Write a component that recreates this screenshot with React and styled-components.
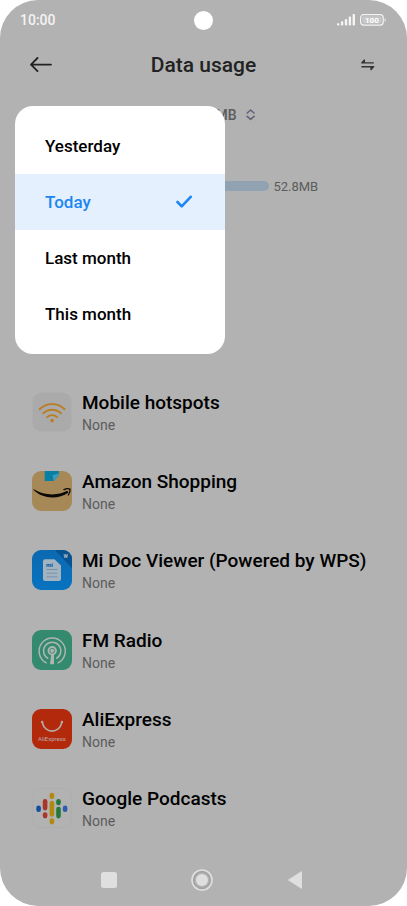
import React, { useState } from "react";
import styled, { createGlobalStyle } from "styled-components";

const GlobalStyle = createGlobalStyle`
  * {
    box-sizing: border-box;
  }
  body {
    margin: 0;
    background: #fff;
    font-family: Roboto, "Liberation Sans", sans-serif;
  }
  button {
    border: 0;
    padding: 0;
    background: none;
    color: inherit;
    font: inherit;
    cursor: pointer;
  }
  svg {
    display: block;
    flex-shrink: 0;
  }
`;

const Phone = styled.div`
  display: flex;
  flex-direction: column;
  min-height: 100vh;
  border-radius: 38px;
  background: #b2b2b2;
`;
const StatusBar = styled.div`
  display: grid;
  grid-template-columns: 1fr auto 1fr;
  align-items: center;
  height: 40px;
  padding: 0 20px;
  color: #f4f4f4;
`;
const Clock = styled.span`
  font-size: 14px;
  font-weight: 500;
`;
const Camera = styled.span`
  width: 19px;
  height: 19px;
  border-radius: 50%;
  background: #fff;
`;
const StatusIcons = styled.div`
  display: flex;
  align-items: center;
  justify-content: flex-end;
  gap: 4px;
`;
const Header = styled.header`
  display: flex;
  align-items: center;
  justify-content: space-between;
  height: 50px;
  padding: 0 30px;
  color: #222;
`;
const Title = styled.h1`
  margin: 0;
  font-size: 21px;
  font-weight: 500;
`;
const HeaderButton = styled.button`
  display: flex;
  justify-content: ${props => (props.$end ? "flex-end" : "flex-start")};
  width: 24px;
`;
const Summary = styled.section`
  position: relative;
  min-height: 282px;
  padding: 13px 30px 0;
  color: #5c5c5c;
`;
const PeriodButton = styled.button`
  display: flex;
  align-items: center;
  justify-content: flex-end;
  gap: 9px;
  width: 65%;
  height: 24px;
  font-size: 14px;
  font-weight: 500;
`;
const UsageRow = styled.div`
  display: flex;
  align-items: center;
  gap: 4px;
  height: 24px;
  margin-top: 47px;
  font-size: 13px;
`;
const UsageBar = styled.div`
  width: 69%;
  height: 10px;
  border-radius: 5px;
  background: #91a3b3;
`;
const Menu = styled.div`
  position: absolute;
  top: 16px;
  left: 15px;
  width: 210px;
  padding: 12px 0;
  border-radius: 18px;
  background: #fff;
`;
const MenuItem = styled.button`
  display: flex;
  align-items: center;
  justify-content: space-between;
  width: 100%;
  height: 56px;
  padding: 0 32px 0 30px;
  background: ${props => (props.$active ? "#e4f0fe" : "transparent")};
  color: ${props => (props.$active ? "#1c86f2" : "#000")};
  font-size: 17px;
  font-weight: 500;
`;
const AppList = styled.ul`
  display: grid;
  flex: 1;
  grid-auto-rows: 1fr;
  margin: 0;
  padding: 0 32px;
  list-style: none;
`;
const AppRow = styled.li`
  display: flex;
  align-items: center;
  gap: 10px;
`;
const AppText = styled.div`
  padding-top: 2px;
`;
const AppName = styled.div`
  color: #000;
  font-size: 19px;
  font-weight: 500;
  line-height: 24px;
`;
const AppUsage = styled.div`
  color: #5c5c5c;
  font-size: 14px;
  line-height: 20px;
`;
const NavBar = styled.nav`
  display: flex;
  justify-content: center;
  gap: 69px;
  height: 58px;
  padding: 6px 4px 0 0;
`;
const NavButton = styled.button`
  display: flex;
  align-items: center;
  justify-content: center;
  width: 24px;
`;

const Signal = () => (
  <svg width="18" height="12" viewBox="0 0 18 12" fill="currentColor" aria-hidden="true">
    <rect x="0" y="9.2" width="2.4" height="2.4" rx=".8" />
    <rect x="3.9" y="7.2" width="2.4" height="4.4" rx=".8" />
    <rect x="7.8" y="5" width="2.4" height="6.6" rx=".8" />
    <rect x="11.700" y="2.600" width="2.400" height="9" rx=".8" />
    <rect x="15.600" y="0" width="2.400" height="11.600" rx=".8" />
  </svg>
);

const Battery = () => (
  <svg width="28" height="12" viewBox="0 0 28 12" aria-hidden="true">
    <rect x="1.600" y=".7" width="22.600" height="10.400" rx="3" fill="none" stroke="#f4f4f4" strokeWidth="1.200" />
    <rect x="3.200" y="2.300" width="19.400" height="7.200" rx="1.600" fill="#c8c8c8" />
    <path d="M25.600 4.200v3.400c.8-.3 1.100-.9 1.100-1.700s-.3-1.400-1.100-1.700z" fill="#f4f4f4" />
    <text x="12.900" y="8.900" fill="#fff" fontSize="8" fontWeight="700" textAnchor="middle">
      100
    </text>
  </svg>
);

const HotspotIcon = () => (
  <svg width="40" height="40" viewBox="0 0 40 40" aria-hidden="true">
    <rect width="39" height="39" x=".5" y=".5" rx="9.500" fill="#aaa" />
    <g fill="none" stroke="#b97d24" strokeWidth="1.900" strokeLinecap="round">
      <path d="M7.600 17.200a18 18 0 0 1 25 0" />
      <path d="M11.300 21.300a12.600 12.600 0 0 1 17.600 0" />
      <path d="M15.100 25.100a7.200 7.200 0 0 1 10 0" />
    </g>
    <circle cx="20.100" cy="28.600" r="1.800" fill="#b97d24" />
  </svg>
);

const AmazonIcon = () => (
  <svg width="40" height="40" viewBox="0 0 40 40" aria-hidden="true">
    <rect width="40" height="40" rx="9" fill="#a78957" />
    <path d="M12.700 0h14.200v4.400l-5.200 5.500h-9z" fill="#087fa4" />
    <path d="M20.500 4.200l6.400-1.600v1.800l-5.200 5.500z" fill="#3b9cba" />
    <path d="M1.800 18.200C12 24.600 25.500 25 35.300 19.800l1.200 1.600C26 28.900 10.500 28 1.300 18.800z" fill="#090806" />
    <path d="M32 18.700c2.200-1.100 4.400-1.200 6-.6.300 2-.5 4.200-1.700 5.900" fill="none" stroke="#090806" strokeWidth="1.300" strokeLinecap="round" />
  </svg>
);

const DocIcon = () => (
  <svg width="40" height="40" viewBox="0 0 40 40" aria-hidden="true">
    <defs>
      <linearGradient id="docFill" x1="0" y1="0" x2="0" y2="1">
        <stop offset="0" stopColor="#0b69b0" />
        <stop offset="1" stopColor="#0873c0" />
      </linearGradient>
    </defs>
    <rect width="40" height="40" rx="9" fill="url(#docFill)" />
    <path d="M23 0h8a9 9 0 0 1 9 9v9z" fill="#075291" />
    <path d="M13 9.300h9.500l6.500 6.300v13.400a2 2 0 0 1-2 2H13a2 2 0 0 1-2-2V11.300a2 2 0 0 1 2-2z" fill="#a4b3c0" />
    <path d="M14.500 19.500h11M14.500 23.200h11M14.500 26.900h11" stroke="#7793ab" />
    <text x="14" y="17" fill="#0c62a4" fontSize="6" fontWeight="900">
      mi
    </text>
    <text x="33.700" y="8.200" fill="#a4b3c0" fontSize="5" fontWeight="900" textAnchor="middle">
      W
    </text>
  </svg>
);

const RadioIcon = () => (
  <svg width="40" height="40" viewBox="0 0 40 40" aria-hidden="true">
    <rect width="40" height="40" rx="9" fill="#348a6e" />
    <g fill="none" stroke="#adb5b1" strokeLinecap="round">
      <path d="M14.300 32.800a13.100 13.100 0 1 1 11.800 0" strokeWidth="1.500" />
      <path d="M15.800 28.300a8.600 8.600 0 1 1 8.800 0" strokeWidth="1.500" />
      <circle cx="20.200" cy="20.800" r="3.700" strokeWidth="2" />
    </g>
    <circle cx="20.200" cy="20.800" r="2" fill="#adb5b1" />
    <path d="M19.200 24h2.800v10.200h-4z" fill="#adb5b1" />
  </svg>
);

const AliExpressIcon = () => (
  <svg width="40" height="40" viewBox="0 0 40 40" aria-hidden="true">
    <rect width="40" height="40" rx="9" fill="#b2290c" />
    <path d="M10.200 13.200c2.800 11.800 16.900 11.800 19.700 0" fill="none" stroke="#b7aaa7" strokeWidth="1.700" strokeLinecap="round" />
    <circle cx="10.200" cy="12.900" r="1.200" fill="#b7aaa7" />
    <circle cx="29.900" cy="12.900" r="1.200" fill="#b7aaa7" />
    <text x="20" y="31.500" fill="#bda9a5" fontSize="6" textAnchor="middle">
      AliExpress
    </text>
  </svg>
);

const PodcastsIcon = () => (
  <svg width="40" height="40" viewBox="0 0 40 40" aria-hidden="true">
    <rect x=".5" y=".5" width="39" height="39" rx="9" fill="#b2b2b2" stroke="#aeaeae" />
    <rect x="4.300" y="17.600" width="4.600" height="6.400" rx="2.300" fill="#104fa0" />
    <rect x="10.800" y="11" width="4.600" height="11.400" rx="2.300" fill="#aa352b" />
    <rect x="10.800" y="24.200" width="4.600" height="6.200" rx="2.300" fill="#aa352b" />
    <rect x="17.600" y="4.800" width="4.600" height="6.200" rx="2.300" fill="#b28910" />
    <rect x="17.600" y="12.800" width="4.600" height="16" rx="2.300" fill="#b28910" />
    <rect x="17.600" y="30.200" width="4.600" height="6.200" rx="2.300" fill="#b28910" />
    <rect x="24.200" y="11" width="4.600" height="6.200" rx="2.300" fill="#25783b" />
    <rect x="24.200" y="18.800" width="4.600" height="11.600" rx="2.300" fill="#25783b" />
    <rect x="30.800" y="17.600" width="4.600" height="6.400" rx="2.300" fill="#2c5dac" />
  </svg>
);

const periods = ["Yesterday", "Today", "Last month", "This month"];

const apps = [
  { name: "Mobile hotspots", usage: "None", Icon: HotspotIcon },
  { name: "Amazon Shopping", usage: "None", Icon: AmazonIcon },
  { name: "Mi Doc Viewer (Powered by WPS)", usage: "None", Icon: DocIcon },
  { name: "FM Radio", usage: "None", Icon: RadioIcon },
  { name: "AliExpress", usage: "None", Icon: AliExpressIcon },
  { name: "Google Podcasts", usage: "None", Icon: PodcastsIcon }
];

const App = () => {
  const [period, setPeriod] = useState("Today");

  return (
    <Phone>
      <GlobalStyle />
      <StatusBar>
        <Clock>10:00</Clock>
        <Camera />
        <StatusIcons>
          <Signal />
          <Battery />
        </StatusIcons>
      </StatusBar>
      <Header>
        <HeaderButton aria-label="Back">
          <svg width="22" height="16" viewBox="0 0 22 16" fill="none" stroke="currentColor" strokeWidth="1.800" strokeLinecap="round" strokeLinejoin="round">
            <path d="M7.500 1L1 7.600l6.500 6.600M1 7.600h20" />
          </svg>
        </HeaderButton>
        <Title>Data usage</Title>
        <HeaderButton $end aria-label="Switch view">
          <svg width="18" height="12" viewBox="0 0 18 12" fill="#333">
            <path d="M2.200 4.600V3.600L5.200.2l.8.5v2.500h8.800v1.400z" />
            <path d="M15.200 7v1l-3 3.400-.8-.5V8.400H2.400V7z" />
          </svg>
        </HeaderButton>
      </Header>
      <Summary>
        <PeriodButton aria-label="Choose period" aria-haspopup="menu">
          52.8MB
          <svg width="10" height="12" viewBox="0 0 10 12" fill="none" stroke="#62627a" strokeWidth="1.600" strokeLinecap="round" strokeLinejoin="round">
            <path d="M1.200 4L4.600 1 8 4M1.200 7.400l3.400 3 3.400-3" />
          </svg>
        </PeriodButton>
        <UsageRow>
          <UsageBar />
          52.8MB
        </UsageRow>
        <Menu role="menu">
          {periods.map(name => (
            <MenuItem
              key={name}
              role="menuitemradio"
              aria-checked={name === period}
              $active={name === period}
              onClick={() => setPeriod(name)}
            >
              {name}
              {name === period && (
                <svg width="18" height="14" viewBox="0 0 18 14" fill="none" stroke="currentColor" strokeWidth="2.600" strokeLinecap="round" strokeLinejoin="round">
                  <path d="M2.500 7l4.200 4.400L15.700 1.800" />
                </svg>
              )}
            </MenuItem>
          ))}
        </Menu>
      </Summary>
      <AppList>
        {apps.map(({ name, usage, Icon }) => (
          <AppRow key={name}>
            <Icon />
            <AppText>
              <AppName>{name}</AppName>
              <AppUsage>{usage}</AppUsage>
            </AppText>
          </AppRow>
        ))}
      </AppList>
      <NavBar>
        <NavButton aria-label="Recent apps">
          <svg width="16" height="16" viewBox="0 0 16 16">
            <rect width="16" height="16" rx="2.500" fill="#dfdfdf" />
          </svg>
        </NavButton>
        <NavButton aria-label="Home">
          <svg width="22" height="22" viewBox="0 0 22 22">
            <circle cx="11" cy="11" r="8.500" fill="none" stroke="#a3a3a3" strokeWidth="2" />
            <circle cx="11" cy="11" r="10" fill="none" stroke="#dfdfdf" strokeWidth="1.600" />
            <circle cx="11" cy="11" r="6" fill="#dfdfdf" />
          </svg>
        </NavButton>
        <NavButton aria-label="Back">
          <svg width="16" height="20" viewBox="0 0 16 20">
            <path d="M1.500 10L14.500 1.700v16.600z" fill="#dfdfdf" stroke="#dfdfdf" strokeLinejoin="round" />
          </svg>
        </NavButton>
      </NavBar>
    </Phone>
  );
};

export default App;
